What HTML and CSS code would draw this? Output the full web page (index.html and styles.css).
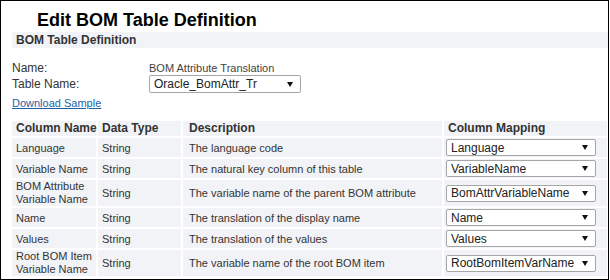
FILE: index.html
```html
<!DOCTYPE html>
<html lang="en">
<head>
    <meta charset="UTF-8">
    <title>Edit BOM Table Definition</title>
    <link rel="stylesheet" href="styles.css">
</head>
<body>
    <div class="panel">
        <h1 class="page-title">Edit BOM Table Definition</h1>
        <div class="section-bar">BOM Table Definition</div>

        <div class="form-grid">
            <span class="form-label">Name:</span>
            <span class="form-value">BOM Attribute Translation</span>
            <span class="form-label">Table Name:</span>
            <span class="select-wrap table-select">
                <select>
                    <option>Oracle_BomAttr_Tr</option>
                </select>
            </span>
        </div>
        <div class="download-row">
            <a href="#" class="download-link">Download Sample</a>
        </div>

        <table class="mapping-table">
            <colgroup>
                <col class="col-name">
                <col class="col-type">
                <col class="col-desc">
                <col class="col-map">
            </colgroup>
            <thead>
                <tr>
                    <th>Column Name</th>
                    <th>Data Type</th>
                    <th class="desc">Description</th>
                    <th>Column Mapping</th>
                </tr>
            </thead>
            <tbody>
                <tr>
                    <td>Language</td>
                    <td>String</td>
                    <td class="desc">The language code</td>
                    <td class="map"><span class="select-wrap"><select><option>Language</option></select></span></td>
                </tr>
                <tr>
                    <td>Variable Name</td>
                    <td>String</td>
                    <td class="desc">The natural key column of this table</td>
                    <td class="map"><span class="select-wrap"><select><option>VariableName</option></select></span></td>
                </tr>
                <tr class="tall">
                    <td>BOM Attribute Variable Name</td>
                    <td>String</td>
                    <td class="desc">The variable name of the parent BOM attribute</td>
                    <td class="map"><span class="select-wrap"><select><option>BomAttrVariableName</option></select></span></td>
                </tr>
                <tr>
                    <td>Name</td>
                    <td>String</td>
                    <td class="desc">The translation of the display name</td>
                    <td class="map"><span class="select-wrap"><select><option>Name</option></select></span></td>
                </tr>
                <tr>
                    <td>Values</td>
                    <td>String</td>
                    <td class="desc">The translation of the values</td>
                    <td class="map"><span class="select-wrap"><select><option>Values</option></select></span></td>
                </tr>
                <tr class="tall">
                    <td>Root BOM Item Variable Name</td>
                    <td>String</td>
                    <td class="desc">The variable name of the root BOM item</td>
                    <td class="map"><span class="select-wrap"><select><option>RootBomItemVarName</option></select></span></td>
                </tr>
            </tbody>
        </table>
    </div>
</body>
</html>
```

FILE: styles.css
```css
body {
    margin: 0;
    font-family: 'Liberation Sans', Arial, sans-serif;
    color: #333;
    background-color: white;
}

.panel {
    box-sizing: border-box;
    width: 609px;
    height: 280px;
    border: 1px solid #000;
    padding: 0 0 0 11px;
    overflow: hidden;
}

.page-title {
    margin: 9px 0 0 0;
    padding-left: 25px;
    font-size: 18px;
    line-height: 20px;
    font-weight: bold;
    color: #000;
}

.section-bar {
    margin-top: 2px;
    height: 16px;
    padding-left: 4px;
    background-color: #f2f3f7;
    font-size: 12px;
    line-height: 16px;
    font-weight: bold;
    color: #333;
}

.form-grid {
    display: grid;
    grid-template-columns: 137px 152px;
    grid-template-rows: 14px 18px;
    align-items: center;
    margin-top: 13px;
}

.form-label {
    font-size: 12px;
    line-height: 14px;
    color: #333;
}

.form-value {
    font-size: 11px;
    line-height: 14px;
    color: #444;
}

.download-row {
    height: 13px;
}

.download-link {
    font-size: 11px;
    line-height: 13px;
    color: #1f5fa6;
    text-decoration: underline;
}

/* fake select arrow drawn over the native control */
.select-wrap {
    position: relative;
    display: block;
    width: 150px;
}

.select-wrap select {
    appearance: none;
    -webkit-appearance: none;
    box-sizing: border-box;
    display: block;
    width: 150px;
    height: 17px;
    margin: 0;
    padding: 0 0 0 4px;
    border: 1px solid #a6a6a6;
    border-radius: 2px;
    background-color: white;
    font-family: 'Liberation Sans', Arial, sans-serif;
    font-size: 12px;
    color: #222;
}

.select-wrap::after {
    content: '';
    position: absolute;
    right: 8px;
    top: 6px;
    border-left: 3px solid transparent;
    border-right: 3px solid transparent;
    border-top: 5px solid #111;
    pointer-events: none;
}

.table-select {
    width: 152px;
}

.table-select select {
    width: 152px;
    height: 18px;
}

.table-select::after {
    right: 8px;
    top: 7px;
}

.mapping-table {
    margin: 13px 0 0 -2px;
    border-collapse: separate;
    border-spacing: 2px;
    table-layout: fixed;
    width: 599px;
    font-size: 11px;
    color: #333;
}

.col-name { width: 84px; }
.col-type { width: 83px; }
.col-desc { width: 259px; }
.col-map { width: 163px; }

.mapping-table th,
.mapping-table td {
    box-sizing: border-box;
    background-color: #f2f3f7;
    padding: 0 0 0 4px;
    text-align: left;
    vertical-align: middle;
}

.mapping-table th {
    height: 15px;
    font-size: 12px;
    line-height: 15px;
    font-weight: bold;
    white-space: nowrap;
}

.mapping-table td {
    height: 19px;
    line-height: 12px;
}

.mapping-table tr.tall td {
    height: 26px;
    line-height: 13px;
}

.mapping-table th.desc,
.mapping-table td.desc {
    padding-left: 6px;
}

.mapping-table td.map {
    padding: 0 0 0 2px;
}
```
